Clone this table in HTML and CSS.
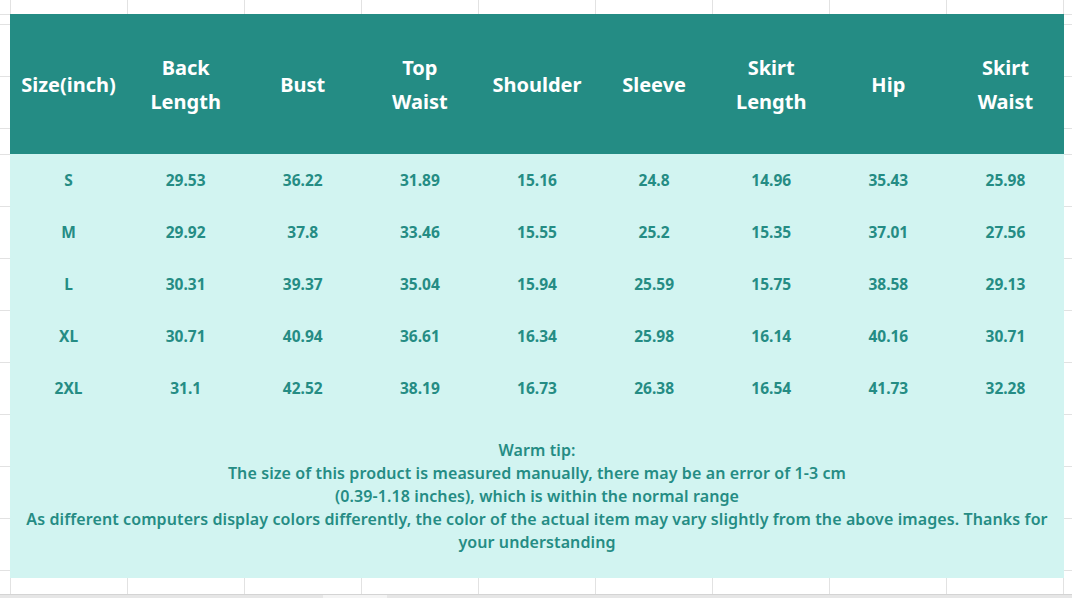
FILE: index.html
```html
<!DOCTYPE html>
<html>
<head>
<meta charset="utf-8">
<link rel="stylesheet" href="styles.css">
</head>
<body>
<div class="sheet">
  <div class="size-table">
    <div class="row head">
      <div class="cell">Size(inch)</div>
      <div class="cell">Back<br>Length</div>
      <div class="cell">Bust</div>
      <div class="cell">Top<br>Waist</div>
      <div class="cell">Shoulder</div>
      <div class="cell">Sleeve</div>
      <div class="cell">Skirt<br>Length</div>
      <div class="cell">Hip</div>
      <div class="cell">Skirt<br>Waist</div>
    </div>
    <div class="row data">
      <div class="cell">S</div><div class="cell">29.53</div><div class="cell">36.22</div><div class="cell">31.89</div><div class="cell">15.16</div><div class="cell">24.8</div><div class="cell">14.96</div><div class="cell">35.43</div><div class="cell">25.98</div>
    </div>
    <div class="row data">
      <div class="cell">M</div><div class="cell">29.92</div><div class="cell">37.8</div><div class="cell">33.46</div><div class="cell">15.55</div><div class="cell">25.2</div><div class="cell">15.35</div><div class="cell">37.01</div><div class="cell">27.56</div>
    </div>
    <div class="row data">
      <div class="cell">L</div><div class="cell">30.31</div><div class="cell">39.37</div><div class="cell">35.04</div><div class="cell">15.94</div><div class="cell">25.59</div><div class="cell">15.75</div><div class="cell">38.58</div><div class="cell">29.13</div>
    </div>
    <div class="row data">
      <div class="cell">XL</div><div class="cell">30.71</div><div class="cell">40.94</div><div class="cell">36.61</div><div class="cell">16.34</div><div class="cell">25.98</div><div class="cell">16.14</div><div class="cell">40.16</div><div class="cell">30.71</div>
    </div>
    <div class="row data">
      <div class="cell">2XL</div><div class="cell">31.1</div><div class="cell">42.52</div><div class="cell">38.19</div><div class="cell">16.73</div><div class="cell">26.38</div><div class="cell">16.54</div><div class="cell">41.73</div><div class="cell">32.28</div>
    </div>
    <div class="tip">
      <p>Warm tip:<br>The size of this product is measured manually, there may be an error of 1-3 cm<br>(0.39-1.18 inches), which is within the normal range<br>As different computers display colors differently, the color of the actual item may vary slightly from the above images. Thanks for your understanding</p>
    </div>
  </div>
</div>
<div class="scrollbar"><div class="thumb"></div><div class="gap"></div><div class="track"></div></div>
</body>
</html>
```

FILE: styles.css
```css
html, body {
  margin: 0;
  padding: 0;
}
body {
  width: 1072px;
  height: 598px;
  overflow: hidden;
  background-color: #ffffff;
  background-image:
    linear-gradient(to bottom, transparent 14px, #e2e2e2 14px, #e2e2e2 15px, transparent 15px),
    repeating-linear-gradient(to right, #e2e2e2 0, #e2e2e2 1px, transparent 1px, transparent 117px),
    repeating-linear-gradient(to bottom, #e2e2e2 0, #e2e2e2 1px, transparent 1px, transparent 52px);
  background-position: 0 0, 10px 0, 0 154px;
  background-size: 100% 100%, 100% 100%, 100% 100%;
  font-family: "Noto Sans", "Open Sans", sans-serif;
  display: flex;
  flex-direction: column;
}
.sheet {
  padding: 14px 0 0 10px;
  height: 581px;
  box-sizing: border-box;
}
.size-table {
  width: 1054px;
  display: flex;
  flex-direction: column;
}
.row {
  display: grid;
  grid-template-columns: repeat(9, 1fr);
}
.cell {
  display: flex;
  align-items: center;
  justify-content: center;
  text-align: center;
}
.head {
  height: 140px;
  background: #248c84;
  color: #ffffff;
  font-size: 20px;
  font-weight: 700;
  line-height: 34px;
  padding-top: 1px;
  box-sizing: border-box;
}
.data {
  height: 52px;
  background: #d2f4f1;
  color: #258c84;
  font-size: 15.5px;
  font-weight: 700;
  padding-bottom: 1px;
  box-sizing: border-box;
}
.tip {
  height: 164px;
  background: #d2f4f1;
  color: #258c84;
  display: flex;
  align-items: center;
  justify-content: center;
  padding: 0 8px;
  box-sizing: border-box;
}
.tip p {
  margin: 0;
  text-align: center;
  font-size: 16px;
  font-weight: 600;
  letter-spacing: 0.1px;
  line-height: 23px;
}
.scrollbar {
  margin-top: 14px;
  height: 3px;
  display: flex;
  border-top: 1px solid #d4d4d4;
  background: #ececec;
}
.thumb {
  width: 323px;
  background: #e6e6e6;
}
.gap {
  width: 64px;
  background: #f4f4f4;
}
.track {
  flex: 1;
  background: #e6e6e6;
}
```
